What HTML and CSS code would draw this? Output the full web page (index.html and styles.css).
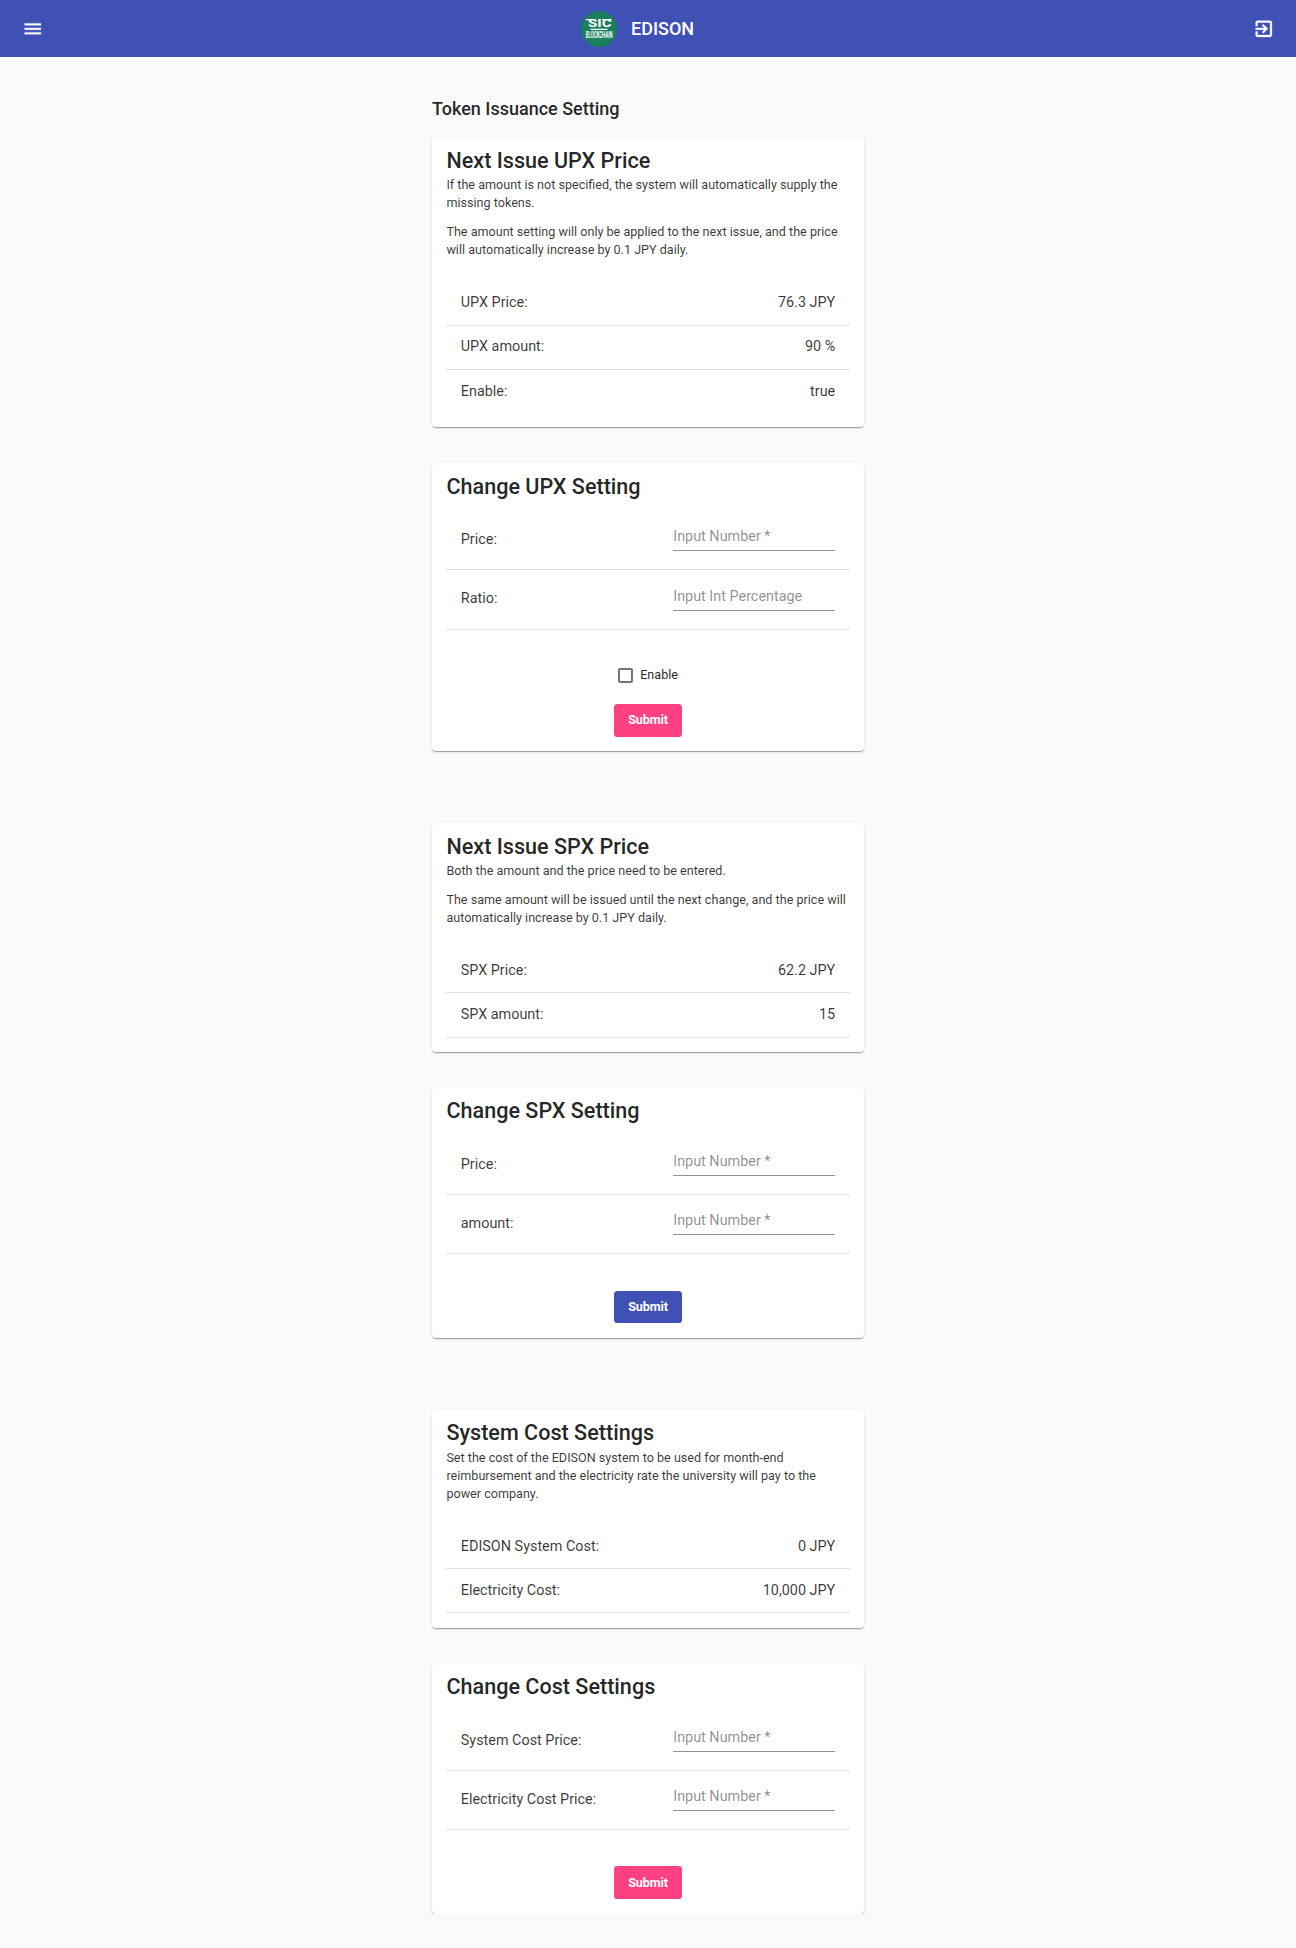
FILE: index.html
```html
<!DOCTYPE html>
<html lang="en">
<head>
<meta charset="utf-8">
<title>EDISON</title>
<link rel="stylesheet" href="styles.css">
</head>
<body>
<header class="toolbar">
  <button class="icon-button" aria-label="Menu"><svg viewBox="0 0 24 24"><path d="M3 18h18v-2H3v2zm0-5h18v-2H3v2zm0-7v2h18V6H3z"/></svg></button>
  <div class="brand">
    <svg class="logo" viewBox="0 0 36 36">
      <circle class="logo-disc" cx="18" cy="18" r="18"/>
      <path class="logo-line" d="M4.8 8.7H11.5M21 8.7H31M9.5 18.4H26.5"/>
      <text class="logo-name" x="7" y="16.2" textLength="23.5" lengthAdjust="spacingAndGlyphs">SIC</text>
      <text class="logo-sub" x="4.7" y="27.4" textLength="26.8" lengthAdjust="spacingAndGlyphs">BLOCKCHAIN</text>
    </svg>
    <span class="brand-name">EDISON</span>
  </div>
  <button class="icon-button" aria-label="Log out"><svg viewBox="0 0 24 24"><path d="M10.09 15.59L11.5 17l5-5-5-5-1.41 1.41L12.67 11H3v2h9.67l-2.58 2.59zM19 3H5c-1.11 0-2 .9-2 2v4h2V5h14v14H5v-4H3v4c0 1.1.89 2 2 2h14c1.1 0 2-.9 2-2V5c0-1.1-.9-2-2-2z"/></svg></button>
</header>

<main class="content">
  <h1 class="page-title">Token Issuance Setting</h1>

  <section class="group">
    <article class="card">
      <h2 class="card-title">Next Issue UPX Price</h2>
      <p>If the amount is not specified, the system will automatically supply the missing tokens.</p>
      <p>The amount setting will only be applied to the next issue, and the price will automatically increase by 0.1 JPY daily.</p>
      <ul class="list">
        <li class="row"><span>UPX Price:</span><span>76.3 JPY</span></li>
        <li class="row"><span>UPX amount:</span><span>90 %</span></li>
        <li class="row row-last"><span>Enable:</span><span>true</span></li>
      </ul>
    </article>
    <form class="card card-form">
      <h2 class="card-title">Change UPX Setting</h2>
      <div class="fields">
        <label class="row field-row"><span>Price:</span><input class="field" placeholder="Input Number *"></label>
        <label class="row field-row"><span>Ratio:</span><input class="field" placeholder="Input Int Percentage"></label>
      </div>
      <label class="check"><span class="check-box"></span>Enable</label>
      <button class="submit accent" type="button">Submit</button>
    </form>
  </section>

  <section class="group">
    <article class="card">
      <h2 class="card-title">Next Issue SPX Price</h2>
      <p>Both the amount and the price need to be entered.</p>
      <p>The same amount will be issued until the next change, and the price will automatically increase by 0.1 JPY daily.</p>
      <ul class="list">
        <li class="row"><span>SPX Price:</span><span>62.2 JPY</span></li>
        <li class="row"><span>SPX amount:</span><span>15</span></li>
      </ul>
    </article>
    <form class="card card-form">
      <h2 class="card-title">Change SPX Setting</h2>
      <div class="fields">
        <label class="row field-row"><span>Price:</span><input class="field" placeholder="Input Number *"></label>
        <label class="row field-row"><span>amount:</span><input class="field" placeholder="Input Number *"></label>
      </div>
      <button class="submit primary" type="button">Submit</button>
    </form>
  </section>

  <section class="group">
    <article class="card">
      <h2 class="card-title">System Cost Settings</h2>
      <p>Set the cost of the EDISON system to be used for month-end reimbursement and the electricity rate the university will pay to the power company.</p>
      <ul class="list">
        <li class="row"><span>EDISON System Cost:</span><span>0 JPY</span></li>
        <li class="row"><span>Electricity Cost:</span><span>10,000 JPY</span></li>
      </ul>
    </article>
    <form class="card card-form">
      <h2 class="card-title">Change Cost Settings</h2>
      <div class="fields">
        <label class="row field-row"><span>System Cost Price:</span><input class="field" placeholder="Input Number *"></label>
        <label class="row field-row"><span>Electricity Cost Price:</span><input class="field" placeholder="Input Number *"></label>
      </div>
      <button class="submit accent" type="button">Submit</button>
    </form>
  </section>
</main>
</body>
</html>
```
FILE: styles.css
```css
* { box-sizing: border-box; }

body {
  margin: 0;
  background: #fafafa;
  color: rgba(0, 0, 0, 0.87);
  font: 400 12.6px/18px Roboto, sans-serif;
}

.toolbar {
  display: flex;
  align-items: center;
  justify-content: space-between;
  height: 57.4px;
  padding: 0 14.4px;
  background: #3f51b5;
  color: #fff;
}

.icon-button {
  display: flex;
  align-items: center;
  justify-content: center;
  width: 36px;
  height: 36px;
  padding: 0;
  border: 0;
  background: none;
}

.icon-button svg { width: 21.6px; height: 21.6px; fill: #fff; stroke: #fff; stroke-width: 0.4; }

.brand { display: flex; align-items: center; gap: 14.4px; margin-right: 21.2px; }
.brand-name { padding-top: 1px; font-size: 18px; font-weight: 500; line-height: 28px; }

.logo { width: 36px; height: 36px; overflow: visible; }
.logo-disc { fill: #1b7f5e; }
.logo-line { stroke: #fff; stroke-width: 1.3; }
.logo-name { fill: #fff; font: 700 10px Roboto, sans-serif; }
.logo-sub { fill: #fff; font: 700 8.5px Roboto, sans-serif; }

.content { width: 432px; margin: 0 auto; }

.page-title {
  margin: 0;
  padding: 37.5px 0 13.8px;
  font-size: 18px;
  font-weight: 500;
  line-height: 28.8px;
}

.group { display: flex; flex-direction: column; gap: 36px; }
.group + .group { margin-top: 71.9px; }

.card {
  display: flex;
  flex-direction: column;
  padding: 14.4px;
  border-radius: 4px;
  background: #fff;
  box-shadow: 0 2px 1px -1px rgba(0, 0, 0, 0.2), 0 1px 1px rgba(0, 0, 0, 0.14), 0 1px 3px rgba(0, 0, 0, 0.12);
}
.card-form { padding-bottom: 14.7px; }

.card-title { margin: 0 0 6.4px; font-size: 21.6px; font-weight: 500; line-height: 18px; }

.card p { margin: 0; color: rgba(0, 0, 0, 0.78); }
.card p + p { margin-top: 10.8px; }

.list { margin: 22.4px 0 0; padding: 0; list-style: none; }

.row {
  display: flex;
  align-items: center;
  justify-content: space-between;
  height: 44.1px;
  padding: 0 14.4px;
  border-bottom: 1px solid rgba(0, 0, 0, 0.12);
  color: rgba(0, 0, 0, 0.78);
  font-size: 14.4px;
}
.row-last { height: 43.2px; padding-top: 1px; border-bottom: 0; }

.fields { margin: 9px 0 36.4px; }
.field-row { height: 59.3px; }

.field {
  width: 162px;
  height: 25px;
  margin-top: -2.4px;
  padding: 0 0 3.4px;
  border: 0;
  border-bottom: 1px solid rgba(0, 0, 0, 0.42);
  border-radius: 0;
  background: none;
  font: inherit;
}
.field::placeholder { color: rgba(0, 0, 0, 0.45); }

.check { display: flex; align-items: center; align-self: center; gap: 7.2px; height: 18px; margin: 0.5px 0 19.7px; }
.check-box { width: 15px; height: 15px; border: 2px solid rgba(0, 0, 0, 0.54); border-radius: 2px; }

.submit {
  align-self: center;
  width: 68px;
  height: 32.6px;
  padding: 0;
  border: 0;
  border-radius: 3.6px;
  color: #fff;
  font: 700 12.6px/30px Roboto, sans-serif;
  letter-spacing: -0.15px;
}
.accent { background: #ff4081; }
.primary { background: #3f51b5; }
```
